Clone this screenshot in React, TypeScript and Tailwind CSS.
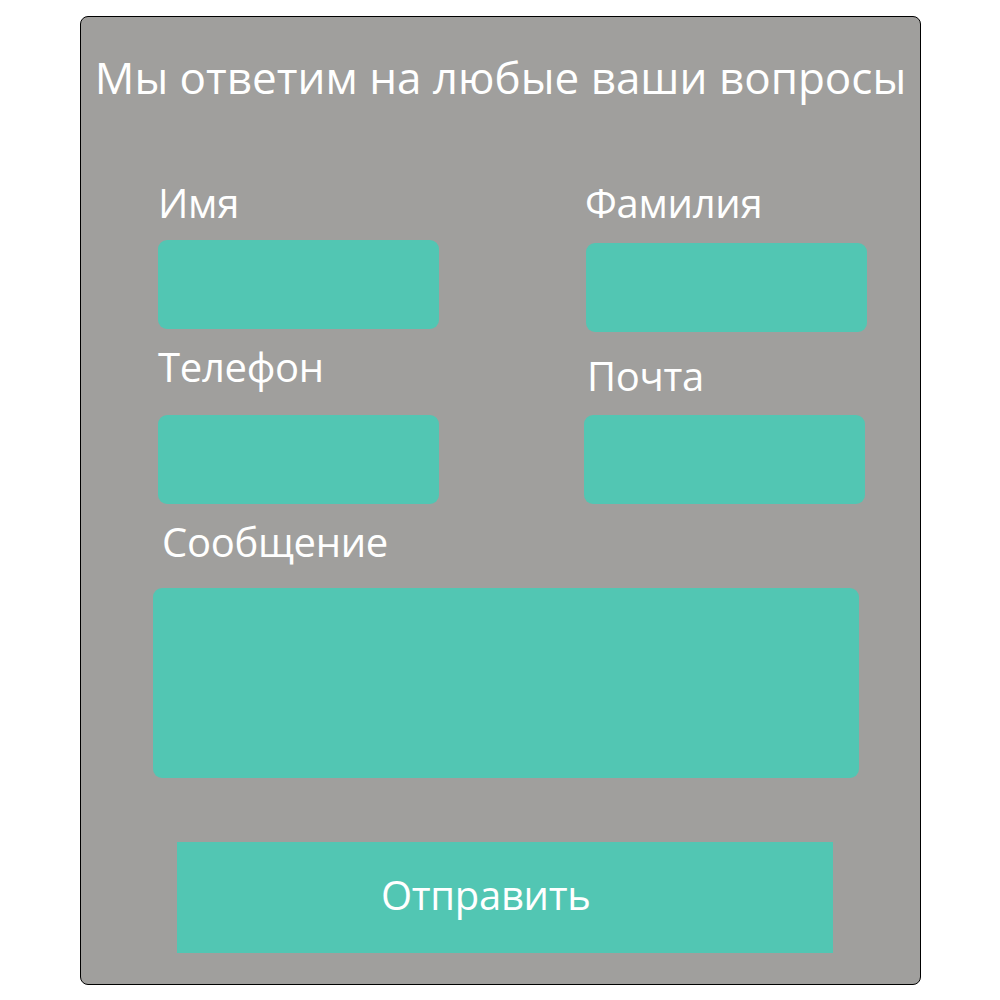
import React from "react";

const font = { fontFamily: '"Open Sans", "Liberation Sans", sans-serif' };

function Field({
  label,
  labelClass,
  inputClass,
}: {
  label: string;
  labelClass: string;
  inputClass: string;
}) {
  return (
    <div className="flex flex-col">
      <label className={`text-[40px] leading-[42px] tracking-[-0.3px] text-white ${labelClass}`}>
        {label}
      </label>
      <input
        className={`h-[89px] w-[281px] rounded-[9px] bg-[#52c6b3] outline-none ${inputClass}`}
      />
    </div>
  );
}

export default function App() {
  return (
    <div className="min-h-screen bg-white pt-[16px] pl-[80px]" style={font}>
      <form
        className="flex h-[969px] w-[841px] flex-col rounded-[8px] border border-black bg-[#a09f9d]"
        onSubmit={(e) => e.preventDefault()}
      >
        <h1 className="mt-[38px] text-center text-[44px] leading-[44px] font-normal text-white">
          Мы ответим на любые ваши вопросы
        </h1>

        <div className="mt-[83px] flex">
          <div className="ml-[77px] flex flex-col">
            <Field label="Имя" labelClass="" inputClass="mt-[16px]" />
            <Field label="Телефон" labelClass="mt-[17px]" inputClass="mt-[27px]" />
          </div>
          <div className="ml-[146px] flex flex-col">
            <Field label="Фамилия" labelClass="" inputClass="mt-[19px] ml-[1px]" />
            <Field label="Почта" labelClass="mt-[23px] ml-[2px]" inputClass="mt-[18px] -ml-[1px] h-[88px]" />
          </div>
        </div>

        <label className="mt-[17px] ml-[81px] text-[40px] leading-[42px] tracking-[-0.3px] text-white">
          Сообщение
        </label>
        <textarea className="mt-[25px] ml-[72px] h-[190px] w-[706px] resize-none rounded-[9px] bg-[#52c6b3] outline-none" />

        <button
          type="submit"
          className="mt-[64px] ml-[96px] flex h-[111px] w-[656px] items-start bg-[#52c6b3] pt-[32px] pl-[204px] text-[40px] leading-[42px] tracking-[-0.3px] text-white"
        >
          Отправить
        </button>
      </form>
    </div>
  );
}
